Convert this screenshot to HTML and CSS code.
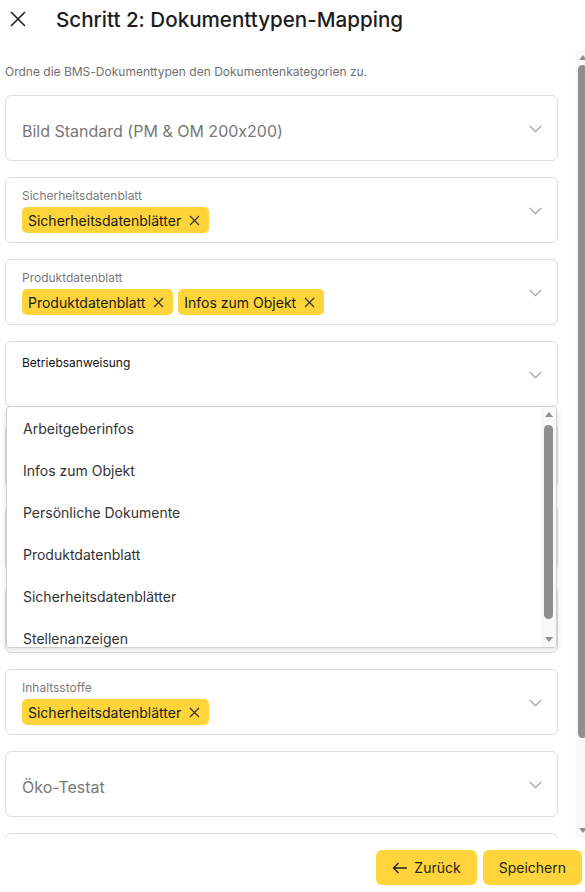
FILE: index.html
```html
<!DOCTYPE html>
<html lang="de">
<head>
    <meta charset="UTF-8">
    <meta name="viewport" content="width=device-width, initial-scale=1.0">
    <title>Dokumenttypen-Mapping</title>
    <link rel="stylesheet" href="styles.css">
</head>
<body>
    <div class="dialog">
        <header class="dialog-head">
            <button class="close-btn" aria-label="Schließen">
                <svg width="20" height="20" viewBox="0 0 20 20"><path d="M3.5 3.5L16.5 16.5M16.5 3.5L3.5 16.5" stroke="#222" stroke-width="1.6" fill="none" stroke-linecap="round"/></svg>
            </button>
            <h2 class="dialog-title">Schritt 2: Dokumenttypen-Mapping</h2>
        </header>

        <div class="dialog-body">
            <div class="scroll-content">
                <p class="hint">Ordne die BMS-Dokumenttypen den Dokumentenkategorien zu.</p>

                <div class="field-list">
                    <div class="field">
                        <div class="field-main placeholder">Bild Standard (PM &amp; OM 200x200)</div>
                        <svg class="chevron" width="13" height="8" viewBox="0 0 13 8"><polyline points="0.7,0.8 6.5,6.6 12.3,0.8" fill="none" stroke="#999" stroke-width="1.1"/></svg>
                    </div>

                    <div class="field">
                        <div class="field-main">
                            <span class="field-label">Sicherheitsdatenblatt</span>
                            <div class="chips">
                                <span class="chip">Sicherheitsdatenblätter <svg width="11" height="11" viewBox="0 0 11 11"><path d="M1 1L10 10M10 1L1 10" stroke="#333" stroke-width="1.2"/></svg></span>
                            </div>
                        </div>
                        <svg class="chevron" width="13" height="8" viewBox="0 0 13 8"><polyline points="0.7,0.8 6.5,6.6 12.3,0.8" fill="none" stroke="#999" stroke-width="1.1"/></svg>
                    </div>

                    <div class="field">
                        <div class="field-main">
                            <span class="field-label">Produktdatenblatt</span>
                            <div class="chips">
                                <span class="chip">Produktdatenblatt <svg width="11" height="11" viewBox="0 0 11 11"><path d="M1 1L10 10M10 1L1 10" stroke="#333" stroke-width="1.2"/></svg></span>
                                <span class="chip">Infos zum Objekt <svg width="11" height="11" viewBox="0 0 11 11"><path d="M1 1L10 10M10 1L1 10" stroke="#333" stroke-width="1.2"/></svg></span>
                            </div>
                        </div>
                        <svg class="chevron" width="13" height="8" viewBox="0 0 13 8"><polyline points="0.7,0.8 6.5,6.6 12.3,0.8" fill="none" stroke="#999" stroke-width="1.1"/></svg>
                    </div>

                    <div class="field open">
                        <div class="field-main">
                            <span class="field-label active">Betriebsanweisung</span>
                        </div>
                        <svg class="chevron" width="13" height="8" viewBox="0 0 13 8"><polyline points="0.7,0.8 6.5,6.6 12.3,0.8" fill="none" stroke="#999" stroke-width="1.1"/></svg>

                        <div class="menu">
                            <ul class="menu-list">
                                <li>Arbeitgeberinfos</li>
                                <li>Infos zum Objekt</li>
                                <li>Persönliche Dokumente</li>
                                <li>Produktdatenblatt</li>
                                <li>Sicherheitsdatenblätter</li>
                                <li>Stellenanzeigen</li>
                            </ul>
                            <div class="scrollbar">
                                <span class="sb-arrow up"></span>
                                <span class="sb-track"><span class="sb-thumb" style="margin-top: 3px; height: 194px;"></span></span>
                                <span class="sb-arrow down"></span>
                            </div>
                        </div>
                    </div>

                    <!-- covered by the open menu -->
                    <div class="field"></div>
                    <div class="field"></div>
                    <div class="field"></div>

                    <div class="field">
                        <div class="field-main">
                            <span class="field-label">Inhaltsstoffe</span>
                            <div class="chips">
                                <span class="chip">Sicherheitsdatenblätter <svg width="11" height="11" viewBox="0 0 11 11"><path d="M1 1L10 10M10 1L1 10" stroke="#333" stroke-width="1.2"/></svg></span>
                            </div>
                        </div>
                        <svg class="chevron" width="13" height="8" viewBox="0 0 13 8"><polyline points="0.7,0.8 6.5,6.6 12.3,0.8" fill="none" stroke="#999" stroke-width="1.1"/></svg>
                    </div>

                    <div class="field">
                        <div class="field-main placeholder">Öko-Testat</div>
                        <svg class="chevron" width="13" height="8" viewBox="0 0 13 8"><polyline points="0.7,0.8 6.5,6.6 12.3,0.8" fill="none" stroke="#999" stroke-width="1.1"/></svg>
                    </div>

                    <div class="field"></div>
                </div>
            </div>

            <div class="scrollbar">
                <span class="sb-arrow up"></span>
                <span class="sb-track"><span class="sb-thumb" style="height: 673px;"></span></span>
                <span class="sb-arrow down"></span>
            </div>
        </div>

        <footer class="dialog-foot">
            <button class="btn">
                <svg width="16" height="12" viewBox="0 0 16 12"><path d="M15 6H1.5M6.5 1L1.5 6L6.5 11" fill="none" stroke="#222" stroke-width="1.3"/></svg>
                Zurück
            </button>
            <button class="btn">Speichern</button>
        </footer>
    </div>
</body>
</html>
```

FILE: styles.css
```css
body {
    margin: 0;
    overflow: hidden;
    font-family: "Inter", "Noto Sans", sans-serif;
    font-feature-settings: "calt" 0;
    background: #fff;
    color: #222;
}
.dialog {
    width: 590px;
    height: 100vh;
    display: flex;
    flex-direction: column;
}
.dialog-head {
    height: 50px;
    flex: none;
    box-sizing: border-box;
    display: flex;
    align-items: flex-start;
    padding: 8px 0 0 8px;
    gap: 28px;
}
.close-btn {
    background: none;
    border: none;
    padding: 0;
    width: 20px;
    height: 20px;
    margin-top: 1px;
    cursor: pointer;
}
.dialog-title {
    margin: 0;
    font-size: 20.6px;
    line-height: 24px;
    font-weight: 500;
    color: #1c1c1c;
}
.dialog-body {
    flex: 1;
    min-height: 0;
    display: flex;
}
.scroll-content {
    flex: 1;
    min-width: 0;
    overflow: hidden;
    padding: 15px 17px 0 5px;
}
.hint {
    margin: 0 0 16px;
    font-size: 12px;
    line-height: 14px;
    color: #707070;
}
.field-list {
    display: flex;
    flex-direction: column;
    gap: 16px;
}
.field {
    position: relative;
    height: 66px;
    flex: none;
    box-sizing: border-box;
    border: 1px solid #dedede;
    border-radius: 6px;
    display: flex;
    align-items: center;
    padding: 11px 16px 9px 16px;
}
.field.open {
    z-index: 5;
}
.field-main {
    flex: 1;
    display: flex;
    flex-direction: column;
    align-self: stretch;
}
.field-main.placeholder {
    justify-content: center;
    font-size: 16px;
    color: #787878;
    padding-top: 3px;
}
.field-label {
    font-size: 12px;
    line-height: 14px;
    color: #7a7a7a;
    margin-bottom: 4px;
}
.field-label.active {
    color: #111;
    margin-top: 3px;
}
.chips {
    display: flex;
    gap: 5px;
}
.chip {
    display: inline-flex;
    align-items: center;
    gap: 8px;
    height: 26px;
    padding: 0 9px 0 6px;
    border-radius: 5px;
    background: #ffd43b;
    font-size: 14px;
    color: #1a1a1a;
}
.chevron {
    flex: none;
    margin-right: -1px;
}
.menu {
    position: absolute;
    top: 100%;
    left: 0;
    right: 0;
    height: 242px;
    box-sizing: border-box;
    display: flex;
    background: #fff;
    border: 1px solid #cfcfcf;
    border-radius: 4px;
    box-shadow: 0 2px 6px rgba(0, 0, 0, 0.12);
    overflow: hidden;
}
.menu-list {
    flex: 1;
    margin: 0;
    padding: 1px 0 0;
    list-style: none;
    overflow: hidden;
}
.menu-list li {
    height: 42px;
    line-height: 42px;
    padding: 0 16px;
    font-size: 14px;
    color: #333;
}

/* drawn scrollbar */
.scrollbar {
    width: 15px;
    flex: none;
    display: flex;
    flex-direction: column;
    background: #f8f8f8;
}
.sb-arrow {
    height: 15px;
    flex: none;
    display: flex;
    align-items: center;
    justify-content: center;
}
.sb-arrow::before {
    content: "";
    width: 0;
    height: 0;
    border-left: 4px solid transparent;
    border-right: 4px solid transparent;
}
.sb-arrow.up::before {
    border-bottom: 5px solid #8e8e8e;
}
.sb-arrow.down::before {
    border-top: 5px solid #8e8e8e;
}
.sb-track {
    flex: 1;
    display: flex;
    flex-direction: column;
    align-items: center;
}
.sb-thumb {
    width: 9px;
    border-radius: 5px;
    background: #8e8e8e;
}

.dialog-foot {
    height: 54px;
    flex: none;
    box-sizing: border-box;
    display: flex;
    justify-content: flex-end;
    align-items: flex-start;
    gap: 6px;
    padding: 12px 8px 0;
}
.btn {
    height: 35px;
    display: inline-flex;
    align-items: center;
    gap: 6px;
    padding: 0 16px;
    border: none;
    border-radius: 6px;
    background: #ffd43b;
    font-family: "Inter", "Noto Sans", sans-serif;
    font-size: 14px;
    color: #222;
    cursor: pointer;
}
```
